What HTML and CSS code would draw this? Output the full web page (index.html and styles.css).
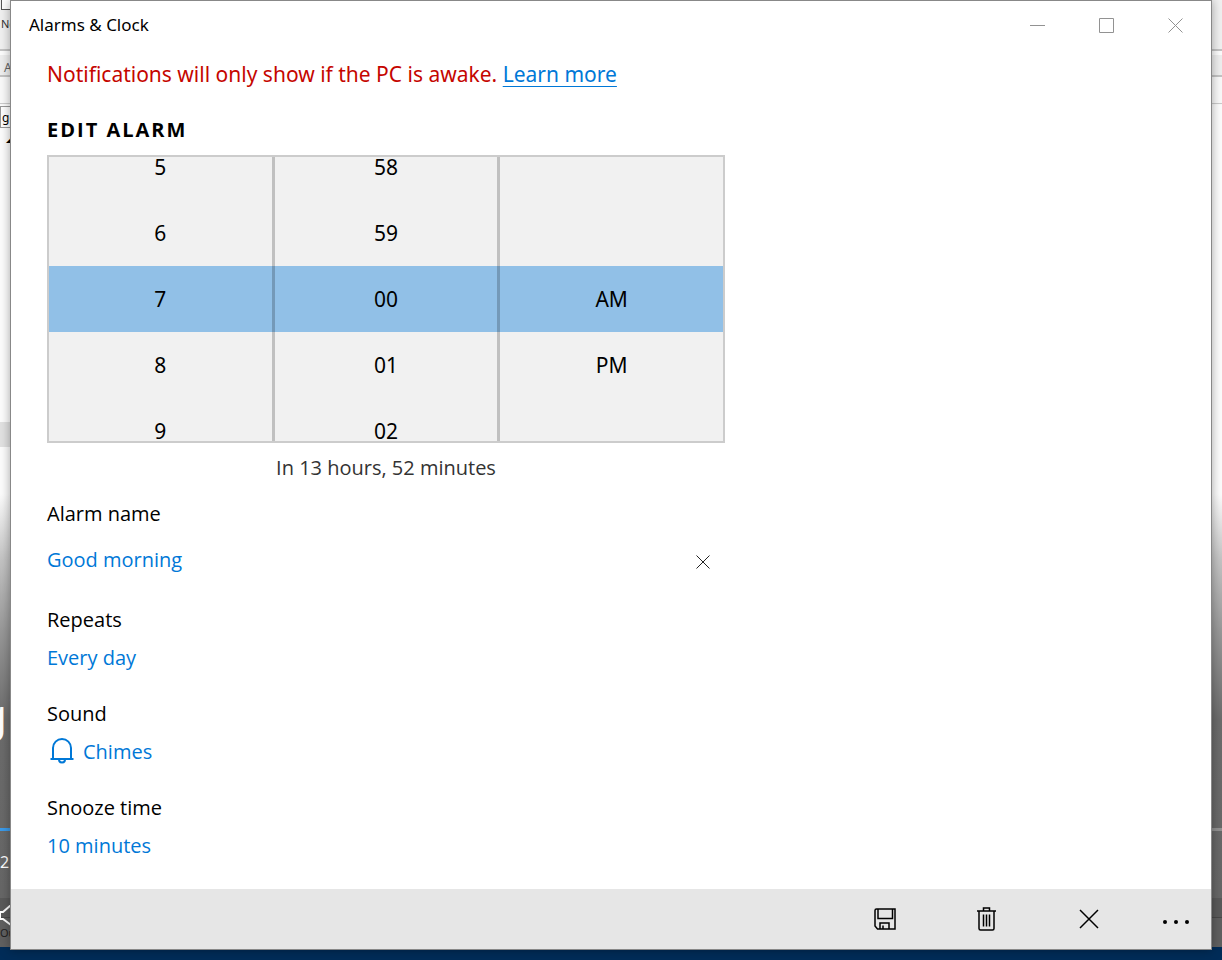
FILE: index.html
```
<!DOCTYPE html>
<html lang="en">
<head>
<meta charset="utf-8">
<title>Alarms &amp; Clock</title>
<link rel="stylesheet" href="styles.css">
</head>
<body>
<div class="desktop">
  <div class="backdrop" aria-hidden="true">
    <div class="sheet"></div>
    <div class="ribbon-edge"></div>
    <div class="ribbon-band"></div>
    <div class="grey-band"></div>
    <div class="progress"></div>
    <div class="lower-band"></div>
    <div class="taskbar"></div>
    <span class="peek page-icon"></span>
    <span class="peek peek-new">New</span>
    <span class="peek peek-a">A</span>
    <span class="peek peek-bar"></span>
    <span class="peek peek-field">go</span>
    <span class="peek peek-arrow">◢</span>
    <span class="peek peek-big">gi</span>
    <span class="peek peek-time">2</span>
    <span class="peek peek-out">Out</span>
    <svg class="peek peek-speaker" width="24" height="24" viewBox="0 0 24 24" fill="none" stroke="#fff" stroke-width="2"><path d="M0 7h3l8-7v20l-8-6H0z"/></svg>
  </div>
  <main class="window">
    <header class="titlebar">
      <h1 class="app-title">Alarms &amp; Clock</h1>
      <div class="caption-buttons">
        <button class="caption" aria-label="Minimize"><svg width="16" height="16" viewBox="0 0 16 16"><path d="M0 7.500h15"/></svg></button>
        <button class="caption" aria-label="Maximize"><svg width="16" height="16" viewBox="0 0 16 16"><path d="M.5.5h14v14H.5z"/></svg></button>
        <button class="caption" aria-label="Close"><svg width="16" height="16" viewBox="0 0 16 16"><path d="M.5.5l14 14M14.500.5l-14 14"/></svg></button>
      </div>
    </header>
    <section class="content">
      <p class="notice">Notifications will only show if the PC is awake. <a href="#learn">Learn more</a></p>
      <h2 class="heading">EDIT ALARM</h2>
      <div class="picker" role="group" aria-label="Alarm time">
        <div class="wheel" role="group" aria-label="Hour">
          <button>5</button><button>6</button><button aria-pressed="true">7</button><button>8</button><button>9</button>
        </div>
        <div class="wheel" role="group" aria-label="Minute">
          <button>58</button><button>59</button><button aria-pressed="true">00</button><button>01</button><button>02</button>
        </div>
        <div class="wheel period" role="group" aria-label="Period">
          <button aria-pressed="true">AM</button><button>PM</button>
        </div>
      </div>
      <p class="remaining">In 13 hours, 52 minutes</p>
      <div class="field name-field">
        <label class="label" for="alarm-name">Alarm name</label>
        <div class="name-row">
          <input class="value name-input" id="alarm-name" type="text" value="Good morning">
          <button class="clear" aria-label="Clear name"><svg width="14" height="14" viewBox="0 0 14 14"><path d="M.5.5l13 13M13.500.5l-13 13"/></svg></button>
        </div>
      </div>
      <div class="field">
        <span class="label" id="repeats">Repeats</span>
        <button class="value" aria-describedby="repeats">Every day</button>
      </div>
      <div class="field">
        <span class="label" id="sound">Sound</span>
        <button class="value with-icon" aria-describedby="sound">
          <svg width="28" height="28" viewBox="0 0 28 28" fill="none" stroke="#0078d7" stroke-width="2"><path d="M3.500 21h23M6 21V10a9 9 0 0 1 18 0v11M12 21.500c0 4 6 4 6 0"/></svg>
          Chimes
        </button>
      </div>
      <div class="field">
        <span class="label" id="snooze">Snooze time</span>
        <button class="value" aria-describedby="snooze">10 minutes</button>
      </div>
    </section>
    <footer class="commands">
      <button class="command" aria-label="Save"><svg width="22" height="22" viewBox="0 0 22 22"><path d="M1 2.500V18l2.500 3H21V1H2.500Q1 1 1 2.500zM4 1v9.500h14.500V1M6 21v-6h9v6M9 21v-3.500"/></svg></button>
      <button class="command" aria-label="Delete"><svg width="20" height="24" viewBox="0 0 20 24"><path d="M0 4h19M6.500 4V1h6v3M2 4v17.500q0 1.500 1.500 1.500h12q1.500 0 1.500-1.500V4M6.500 7.500v12M9.500 7.500v12M12.500 7.500v12"/></svg></button>
      <button class="command" aria-label="Cancel"><svg width="20" height="20" viewBox="0 0 20 20"><path d="M1 1l18 18M19 1L1 19"/></svg></button>
      <button class="command more" aria-label="More"><svg width="28" height="6" viewBox="0 0 28 6"><g fill="#000" stroke="none"><circle cx="3" cy="3" r="2"/><circle cx="14" cy="3" r="2"/><circle cx="25" cy="3" r="2"/></g></svg></button>
    </footer>
  </main>
</div>
</body>
</html>
```
FILE: styles.css
```
* { box-sizing: border-box; }
body { margin: 0; font-family: "Segoe UI", "Noto Sans", sans-serif; color: #000; }
h1, h2, p { margin: 0; font-weight: 400; }
button, input { font: inherit; color: inherit; background: none; border: 0; padding: 0; margin: 0; text-align: left; }
svg { display: block; flex: none; }

.desktop { position: relative; min-height: 100vh; display: flex; padding: 0 10px 10px; overflow: hidden; }

/* Other programs that show round the window's edges */
.backdrop { position: absolute; inset: 0; overflow: hidden; background: linear-gradient(#fdfdfd 494px, #c4c4c4 560px, #999 630px, #6c6c6c 720px, #656565); }
.backdrop > * { position: absolute; }
.sheet { left: 0; right: 0; top: 0; height: 49px; background: #f1f1f1; }
.ribbon-edge { left: 0; right: 0; top: 49px; height: 2px; background: #c4c4c4; }
.ribbon-band { left: 0; right: 0; top: 55px; height: 50px; background: linear-gradient(#efefef 20px, #c4c4c4 20px, #c4c4c4 22px, #fafafa 22px, #fafafa 48px, #ccc 48px, #ccc 49px, #fafafa 49px); }
.grey-band { left: 0; width: 11px; top: 422px; height: 25px; background: #e2e2e2; }
.progress { left: 0; right: 0; top: 828px; height: 3px; background: linear-gradient(90deg, #3c9bea 20px, #929292 20px); }
.lower-band { left: 0; right: 0; top: 898px; height: 50px; background: linear-gradient(#5a5a5a 19px, #484848 19px, #484848 20px, #606060 20px); }
.taskbar { left: 0; right: 0; bottom: 0; height: 13px; background: #002c58; }
.page-icon { left: 1px; top: -4px; width: 12px; height: 14px; border: 1px solid #555; background: #fff; }
.peek { white-space: nowrap; }
.peek-new { left: 1px; top: 17px; font-size: 11px; line-height: 14px; color: #333; }
.peek-a { left: 4px; top: 60px; font-size: 12px; line-height: 16px; color: #666; }
.peek-bar { left: 10px; top: 88px; width: 1px; height: 12px; background: #555; }
.peek-field { left: 0; top: 106px; width: 16px; height: 22px; padding-left: 1px; border: 1px solid #999; background: #fff; font-size: 12px; line-height: 22px; }
.peek-arrow { left: 6px; top: 134px; font-size: 8px; line-height: 10px; }
.peek-big { left: -20px; top: 690px; font-size: 44px; line-height: 48px; color: #fff; }
.peek-time { left: 0; top: 852px; font-size: 16px; line-height: 20px; color: #fff; }
.peek-out { left: 0; top: 926px; font-size: 11px; line-height: 14px; color: #222; }
.peek-speaker { left: 0; top: 905px; }

.window { position: relative; flex: 1; display: flex; flex-direction: column; background: #fff; border: 1px solid #888; box-shadow: 0 0 10px rgba(0, 0, 0, .35); }
.titlebar { display: flex; justify-content: space-between; height: 50px; padding-left: 18px; }
.app-title { font-size: 17px; line-height: 48px; }
.caption-buttons { display: flex; padding-right: 1px; }
.caption { display: grid; place-items: center; width: 69px; }
.caption svg { fill: none; stroke: #929292; }

.content { flex: 1; padding: 7px 36px 0; }
.notice { font-size: 21px; line-height: 32px; color: #c50500; }
.notice a { color: #0078d7; text-underline-offset: 4px; text-decoration-thickness: 1px; }
.heading { margin-top: 24px; font-family: "Segoe UI", "Open Sans", sans-serif; font-size: 20px; line-height: 32px; font-weight: 700; letter-spacing: 2px; }

.picker { position: relative; display: flex; max-width: 678px; height: 288px; margin-top: 9px; border: 2px solid #ccc; background: #f1f1f1; overflow: hidden; }
.picker::before { content: ""; position: absolute; left: 0; right: 0; top: 109px; height: 66px; background: #91c0e7; }
.wheel { position: relative; box-sizing: content-box; flex: 1; display: flex; flex-direction: column; justify-content: center; border-left: 3px solid rgba(0, 0, 0, .2); }
.wheel:first-child { border-left: 0; }
.wheel button { flex: none; height: 66px; font-size: 21px; text-align: center; }
.period { justify-content: flex-start; padding-top: 109px; }

.remaining, .field { font-family: "Segoe UI", "Open Sans", sans-serif; font-size: 20px; }
.remaining { max-width: 678px; padding-top: 11px; line-height: 28px; text-align: center; color: #333; }
.field { display: flex; flex-direction: column; align-items: flex-start; margin-top: 28px; }
.name-field { margin-top: 18px; }
.label { line-height: 28px; }
.value { margin-top: 10px; line-height: 28px; color: #0078d7; }
.name-row { display: flex; align-items: center; width: 100%; max-width: 678px; height: 28px; margin: 18px 0 4px; }
.name-input { flex: 1; height: 28px; margin: 0; }
.clear { display: grid; place-items: center; width: 44px; height: 32px; padding-top: 4px; }
.clear svg { fill: none; stroke: #222; }
.with-icon { display: flex; align-items: center; gap: 8px; }

.commands { display: flex; justify-content: flex-end; height: 60px; background: #e6e6e6; }
.command { display: grid; place-items: center; width: 102px; }
.command svg { fill: none; stroke: #000; stroke-width: 1.5; }
.more { width: 71px; padding-top: 6px; }
```
